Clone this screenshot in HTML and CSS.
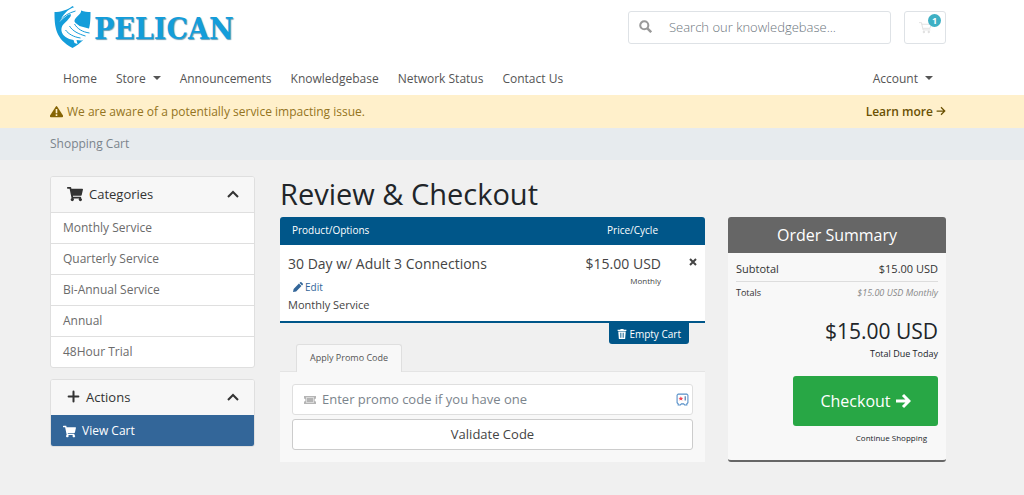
FILE: index.html
```html
<!DOCTYPE html>
<html lang="en">
<head>
<meta charset="utf-8">
<meta name="viewport" content="width=device-width, initial-scale=1">
<title>Shopping Cart - Pelican</title>
<link rel="stylesheet" href="styles.css">
</head>
<body>
<svg class="defs" aria-hidden="true">
  <symbol id="cart" viewBox="0 0 576 512"><path d="M528 301l47-208c4-15-8-29-23-29H159l-9-45C148 8 138 0 126 0H24C11 0 0 11 0 24v16c0 13 11 24 24 24h70l70 343a56 56 0 1 0 67 9h210a56 56 0 1 0 64-10l5-26c4-15-8-29-23-29H218l-7-32h294c11 0 20-8 23-18z"/></symbol>
  <symbol id="chevron" viewBox="0 0 16 16"><path d="M3 11l5-5 5 5" fill="none" stroke="currentColor" stroke-width="2"/></symbol>
  <symbol id="arrow" viewBox="0 0 16 16"><path d="M1 8h13M8 2l6 6-6 6" fill="none" stroke="currentColor" stroke-width="2"/></symbol>
</svg>
<header class="header">
  <div class="container topbar">
    <a class="logo" href="#">
      <svg class="logo-mark" viewBox="0 0 38 44" aria-hidden="true">
        <path class="shield" d="M19 1C14 5 7 7 1 7c0 15 1 27 18 36C36 34 37 22 37 7 31 7 24 5 19 1z"/>
        <path class="bird" d="M6 17C9 10 14 4 21 2c5-1 8 2 6 6-2 3-6 5-6 8 0 2 3 3 5 5l11 3c-1 5-4 8-7 11-2 1-5 0-7 0l1 4-3-1-1-3c-6-1-11-4-12-9-1-6 4-8 7-12 2-2 3-4 2-5-4 1-7 4-11 8z"/>
        <path class="cut" d="M6 16c4-5 9-8 16-10M16 21c3 5 9 8 16 10M21 19c3 5 8 8 15 9M12 25c3 4 8 7 15 8"/>
      </svg>
      <span class="logo-text">PELICAN</span>
    </a>
    <form class="search">
      <button class="search-button" type="button" aria-label="Search">
        <svg class="icon" viewBox="0 0 16 16"><circle cx="6.500" cy="6.500" r="5" fill="none" stroke="currentColor" stroke-width="2.500"/><path d="M10 10l5 5" stroke="currentColor" stroke-width="3"/></svg>
      </button>
      <input class="search-input" type="text" aria-label="Search our knowledgebase" placeholder="Search our knowledgebase...">
    </form>
    <a class="cart-button" href="#" aria-label="Shopping cart">
      <svg class="icon" viewBox="0 0 16 16" fill="none" stroke="currentColor"><path fill="none" d="M0 2h3l2 9h9M3.500 4H15l-1.500 5H5"/><circle cx="6" cy="13.500" r="1"/><circle cx="12" cy="13.500" r="1"/></svg>
      <span class="badge">1</span>
    </a>
  </div>
  <nav class="container nav">
    <a href="#">Home</a>
    <a class="dropdown" href="#">Store</a>
    <a href="#">Announcements</a>
    <a href="#">Knowledgebase</a>
    <a href="#">Network Status</a>
    <a href="#">Contact Us</a>
    <a class="dropdown account" href="#">Account</a>
  </nav>
</header>
<div class="alert">
  <div class="container alert-row">
    <svg class="icon" viewBox="0 0 16 16"><path d="M7 2q1-1.500 2 0l7 11q.5 2-1 2H1q-1.500 0-1-2z"/><path d="M8 5v5M8 11.500v2" stroke="#fff0cb" stroke-width="2"/></svg>
    <span>We are aware of a potentially service impacting issue.</span>
    <a class="learn" href="#">Learn more <svg class="icon-small" viewBox="0 0 16 16"><use href="#arrow"/></svg></a>
  </div>
</div>
<div class="breadcrumb"><div class="container">Shopping Cart</div></div>
<main class="container page">
  <aside class="sidebar">
    <section class="card">
      <h2 class="card-head"><svg class="icon-large"><use href="#cart"/></svg>Categories<svg class="icon-large toggle"><use href="#chevron"/></svg></h2>
      <a class="item" href="#">Monthly Service</a>
      <a class="item" href="#">Quarterly Service</a>
      <a class="item" href="#">Bi-Annual Service</a>
      <a class="item" href="#">Annual</a>
      <a class="item" href="#">48Hour Trial</a>
    </section>
    <section class="card">
      <h2 class="card-head"><svg class="icon" viewBox="0 0 16 16"><path d="M8 2v12M2 8h12" stroke="currentColor" stroke-width="2.500" stroke-linecap="round"/></svg>Actions<svg class="icon-large toggle"><use href="#chevron"/></svg></h2>
      <a class="item active" href="#"><svg class="icon"><use href="#cart"/></svg>View Cart</a>
    </section>
  </aside>
  <div class="content">
    <h1 class="title">Review &amp; Checkout</h1>
    <div class="columns">
      <div class="order">
        <div class="cart-head"><span>Product/Options</span><span>Price/Cycle</span></div>
        <div class="cart-item">
          <div class="product">
            <div class="product-name">30 Day w/ Adult 3 Connections</div>
            <a class="edit" href="#"><svg class="icon-small" viewBox="0 0 16 16"><path d="M0 16l1-5 8.500-8.500 4 4L5 15zM10.500 1.500l1-1q1-1 2 0l2 2q1 1 0 2l-1 1z"/></svg>Edit</a>
            <div class="product-group">Monthly Service</div>
          </div>
          <div class="price"><div class="product-name">$15.00 USD</div><div class="cycle">Monthly</div></div>
          <button class="remove" type="button" aria-label="Remove"><svg class="icon-tiny" viewBox="0 0 8 8"><path d="M1 1l6 6M7 1L1 7" stroke="currentColor" stroke-width="2"/></svg></button>
        </div>
        <button class="empty" type="button"><svg class="icon-small" viewBox="0 0 16 16"><path d="M1 1h4l1-1h4l1 1h4v2H1z"/><path fill-rule="evenodd" d="M2 4h12l-1 12H3zM5 6v8h1V6zm2.500 0v8h1V6zM10 6v8h1V6z"/></svg>Empty Cart</button>
        <div class="tabs"><button class="tab" type="button">Apply Promo Code</button></div>
        <form class="promo">
          <div class="promo-field">
            <svg class="ticket" viewBox="0 0 14 10"><path fill-rule="evenodd" d="M1 1h12v2.500a1.500 1.500 0 0 0 0 3V9H1V6.500a1.500 1.500 0 0 0 0-3zM3 2.500v5h8v-5z"/><path d="M3.500 3h7v4h-7z"/></svg>
            <input class="promo-input" type="text" aria-label="Promo code" placeholder="Enter promo code if you have one">
            <svg class="vault" viewBox="0 0 12 12"><path d="M2 1h8l1 1v7l-1 1v1H8l-1-1H5l-1 1H2v-1L1 9V2z" fill="#fff" stroke="#568fc8"/><path d="M4.500 3l.6 1.400 1.600.1-1.200 1 .4 1.500-1.400-.8-1.400.8.4-1.500-1.200-1 1.600-.1z" fill="#ee4453"/><path d="M8.500 3v4" stroke="#4269a0"/></svg>
          </div>
          <button class="validate" type="button">Validate Code</button>
        </form>
      </div>
      <aside class="summary">
        <h2 class="summary-head">Order Summary</h2>
        <div class="summary-body">
          <div class="line subtotal"><span>Subtotal</span><span>$15.00 USD</span></div>
          <div class="line totals"><span>Totals</span><em>$15.00 USD Monthly</em></div>
          <div class="amount">$15.00 USD</div>
          <div class="due">Total Due Today</div>
          <a class="checkout" href="#">Checkout<svg class="icon-large"><path d="M1 8h12M8 2l6 6-6 6" fill="none" stroke="currentColor" stroke-width="3"/></svg></a>
          <a class="continue" href="#">Continue Shopping</a>
        </div>
      </aside>
    </div>
  </div>
</main>
</body>
</html>
```
FILE: styles.css
```css
* { box-sizing: border-box; }
body { margin: 0; background: #f0f0f0; color: #212529; font: 12px/18px "Open Sans", "Noto Sans", sans-serif; }
a { color: inherit; text-decoration: none; }
h1, h2 { margin: 0; font-weight: 400; }
button, input { font: inherit; color: inherit; margin: 0; }
button { cursor: pointer; }
svg { fill: currentColor; flex: none; }
.defs { position: absolute; width: 0; height: 0; }
.icon { width: 13px; height: 13px; }
.icon-small { width: 10px; height: 10px; }
.icon-tiny { width: 8px; height: 8px; }
.icon-large { width: 16px; height: 16px; }
.container { padding: 0 78px 0 50px; }

.header { background: #fff; }
.topbar { display: flex; align-items: center; height: 54px; }
.logo { display: flex; align-items: center; color: #149dda; margin-right: auto; padding-left: 3px; }
.logo-mark { width: 39px; height: 44px; }
.bird { fill: #fff; }
.cut { fill: none; stroke: #149dda; stroke-width: 1; }
.logo-text { padding: 3px 0 0 2px; font: bold 30px/40px "DejaVu Serif Condensed", "DejaVu Serif", serif; text-shadow: 1px 1px 1px #6b9eb5; }
.search { display: flex; width: 263px; height: 33px; border: 1px solid #dee2e6; border-radius: 3px; margin-right: 13px; }
.search-button { width: 32px; padding: 4px 0 0; border: 0; background: none; color: #999; }
.search-input { flex: 1; min-width: 0; padding: 0 8px; border: 0; background: none; font-size: 13px; font-weight: 300; }
.search-input::placeholder { color: #6c757d; opacity: 1; }
.cart-button { position: relative; display: flex; align-items: center; justify-content: center; width: 42px; height: 33px; border: 1px solid #dee2e6; border-radius: 3px; color: #ddd; }
.badge { position: absolute; top: 2px; right: 4px; width: 13px; height: 13px; border-radius: 50%; background: #3eb0c4; color: #fff; font-size: 9px; font-weight: 700; line-height: 13px; text-align: center; }
.nav { display: flex; align-items: center; gap: 19px; padding-left: 63px; height: 41px; padding-top: 9px; color: #555; line-height: 32px; }
.dropdown::after { content: ""; display: inline-block; margin-left: 7px; vertical-align: 3px; border: 4px solid transparent; border-top-color: currentColor; border-bottom: 0; }
.account { margin-left: auto; margin-right: 13px; }
.alert { background: #fff0cb; color: #947421; }
.alert .icon { color: #856404; }
.alert-row { display: flex; align-items: center; gap: 4px; height: 33px; }
.learn { margin-left: auto; font-weight: 600; color: #6a5003; }
.breadcrumb { background: #e7ebee; color: #7b848c; line-height: 32px; }

.page { display: grid; grid-template-columns: 205fr 666fr; gap: 25px; padding-top: 16px; padding-bottom: 32px; align-items: start; }
.sidebar { display: grid; gap: 11px; }
.card { border: 1px solid #dfdfdf; border-radius: 3px; background: #fff; overflow: hidden; }
.card-head { display: flex; align-items: center; gap: 6px; height: 35px; padding: 0 13px 2px 16px; background: #f7f7f7; font-size: 13px; color: #333; }
.toggle { margin-left: auto; }
.item { display: flex; align-items: center; gap: 6px; padding: 6px 12px; border-top: 1px solid #dfdfdf; color: #6b6b6b; font-size: 12px; }
.active { border-color: #336699; background: #336699; color: #fff; }
.title { font-size: 29px; line-height: 35px; margin-bottom: 6px; }
.columns { display: grid; grid-template-columns: 425fr 218fr; gap: 23px; align-items: start; }
.cart-head { display: flex; justify-content: space-between; padding: 4px 47px 6px 12px; border-radius: 3px 3px 0 0; background: #005689; color: #fff; font-size: 10px; }
.cart-item { display: flex; padding: 10px 8px 7px; border-bottom: 2px solid #005689; background: #fff; color: #444; }
.product { flex: 1; }
.product-name { font-size: 14px; }
.edit { display: flex; align-items: center; gap: 2px; padding: 5px 5px 0; color: #336699; font-size: 10px; }
.product-group { font-size: 11px; }
.price { text-align: right; }
.cycle { font-size: 8px; line-height: 16px; }
.remove { align-self: flex-start; width: 36px; padding: 0; border: 0; background: none; text-align: right; line-height: 14px; }
.empty { display: flex; align-items: center; gap: 2px; margin: 0 16px 0 auto; padding: 0 8px; height: 21px; border: 0; border-radius: 0 0 3px 3px; background: #005689; color: #fff; font-size: 10px; }
.tabs { padding: 0 16px; border-bottom: 1px solid #e4e4e4; }
.tab { display: block; height: 28px; padding: 0 13px 2px; margin-bottom: -1px; border: 1px solid #dfdfdf; border-bottom: 0; border-radius: 3px 3px 0 0; background: #f8f8f8; color: #555; font-size: 9px; }
.promo { display: grid; gap: 4px; padding: 12px; background: #f8f8f8; }
.promo-field { display: flex; align-items: center; gap: 5px; height: 31px; padding: 0 3px 0 10px; border: 1px solid #dfdfdf; border-radius: 3px; background: #fff; }
.ticket { width: 14px; height: 10px; color: #b5b5b5; }
.vault { width: 13px; height: 13px; }
.promo-input { flex: 1; min-width: 0; height: 28px; padding: 0 0 2px; border: 0; background: none; font-size: 13px; }
.promo-input::placeholder { color: #7b848c; opacity: 1; }
.validate { height: 31px; padding: 0 0 2px; border: 1px solid #ccc; border-radius: 3px; background: #fff; color: #444; font-size: 13px; }
.summary { border-bottom: 2px solid #666; border-radius: 3px; background: #f8f8f8; overflow: hidden; }
.summary-head { background: #666; color: #fff; font-size: 16px; line-height: 36px; text-align: center; }
.summary-body { display: flex; flex-direction: column; padding: 7px 8px 10px; }
.line { display: flex; justify-content: space-between; color: #333; }
.subtotal { padding-bottom: 3px; border-bottom: 1px solid #ddd; font-size: 11px; }
.totals { padding-top: 2px; font-size: 9px; }
.totals em { color: #888; }
.amount { padding-top: 14px; font-size: 21px; line-height: 30px; text-align: right; }
.due { font-size: 9px; line-height: 16px; text-align: right; }
.checkout { display: flex; align-items: center; justify-content: center; gap: 4px; align-self: flex-end; width: 145px; height: 50px; margin-top: 14px; border-radius: 3px; background: #28a745; color: #fff; font-size: 16px; }
.continue { align-self: flex-end; padding: 3px 11px; font-size: 8px; }
```
